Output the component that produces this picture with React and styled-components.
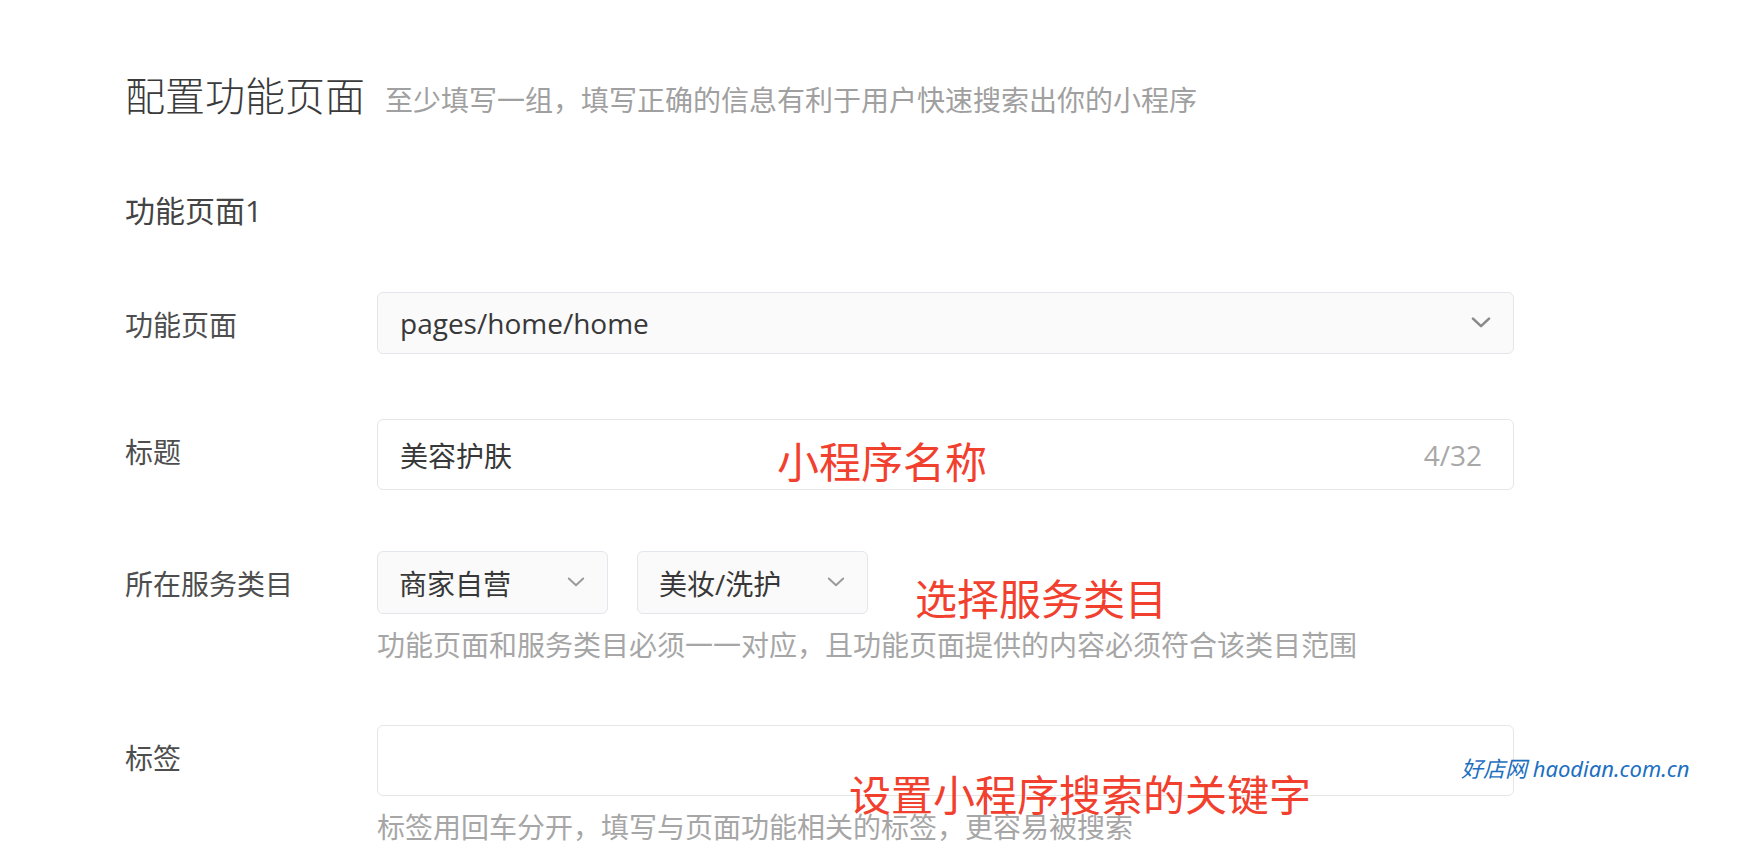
import React from "react";
import styled, { createGlobalStyle } from "styled-components";

const GlobalStyle = createGlobalStyle`
  html, body {
    margin: 0;
    padding: 0;
    background: #fff;
  }
  body {
    font-family: "Open Sans", "Noto Sans CJK SC", sans-serif;
    color: #333;
  }
`;

const Chevron = ({ size = 20, color = "#8a8a8a", weight = 2.6 }) => (
  <svg width={size} height={size * 0.56} viewBox="0 0 20 11" fill="none">
    <path
      d="M2 1.5 L10 9 L18 1.5"
      stroke={color}
      strokeWidth={weight}
      strokeLinecap="round"
      strokeLinejoin="round"
    />
  </svg>
);

const App = () => {
  return (
    <Page>
      <GlobalStyle />
      <Header>
        <Title>配置功能页面</Title>
        <Subtitle>至少填写一组，填写正确的信息有利于用户快速搜索出你的小程序</Subtitle>
      </Header>

      <SectionTitle>功能页面1</SectionTitle>

      <Row>
        <Label>功能页面</Label>
        <Control>
          <Select wide>
            <span>pages/home/home</span>
            <Chevron />
          </Select>
        </Control>
      </Row>

      <Row>
        <Label>标题</Label>
        <Control>
          <TextBox>
            <span>美容护肤</span>
            <Counter>4/32</Counter>
          </TextBox>
          <Note style={{ left: 400, top: 22 }}>小程序名称</Note>
        </Control>
      </Row>

      <Row>
        <Label>所在服务类目</Label>
        <Control>
          <SelectGroup>
            <Select>
              <span>商家自营</span>
              <Chevron size={18} color="#9a9a9a" weight={2.2} />
            </Select>
            <Select>
              <span>美妆/洗护</span>
              <Chevron size={18} color="#9a9a9a" weight={2.2} />
            </Select>
          </SelectGroup>
          <Note style={{ left: 538, top: 27 }}>选择服务类目</Note>
          <Help>功能页面和服务类目必须一一对应，且功能页面提供的内容必须符合该类目范围</Help>
        </Control>
      </Row>

      <Row>
        <Label>标签</Label>
        <Control>
          <TextBox />
          <Note style={{ left: 472, top: 49 }}>设置小程序搜索的关键字</Note>
          <Help>标签用回车分开，填写与页面功能相关的标签，更容易被搜索</Help>
        </Control>
      </Row>

      <Watermark>好店网 haodian.com.cn</Watermark>
    </Page>
  );
};

// ========== 样式 ==========
const Page = styled.div`
  position: relative;
  width: 1738px;
  height: 846px;
  box-sizing: border-box;
  padding: 72px 0 0 125px;
  overflow: hidden;
`;

const Header = styled.div`
  display: flex;
  align-items: baseline;
  gap: 20px;
`;

const Title = styled.h1`
  margin: 0;
  font-size: 40px;
  line-height: 48px;
  font-weight: 300;
  color: #3a3a3a;
`;

const Subtitle = styled.span`
  font-size: 28px;
  color: #a0a0a0;
`;

const SectionTitle = styled.h2`
  margin: 71px 0 0;
  font-size: 30px;
  line-height: 40px;
  font-weight: 400;
  color: #444;
`;

const Row = styled.div`
  display: flex;
  align-items: flex-start;
  margin-top: 61px;

  &:nth-of-type(1) {
    margin-top: 63px;
  }
`;

const Label = styled.div`
  width: 252px;
  flex-shrink: 0;
  font-size: 28px;
  line-height: 66px;
  color: #4e4e4e;
`;

const Control = styled.div`
  position: relative;
  width: 1137px;
`;

const Field = styled.div`
  box-sizing: border-box;
  display: flex;
  align-items: center;
  justify-content: space-between;
  border-radius: 6px;
  font-size: 28px;
  color: #383838;
`;

const Select = styled(Field)`
  width: ${(p) => (p.wide ? "100%" : "231px")};
  height: ${(p) => (p.wide ? "62px" : "63px")};
  padding: ${(p) => (p.wide ? "0 22px" : "0 22px 0 21px")};
  background: #fafafa;
  border: 1.5px solid #e3e6ea;
`;

const SelectGroup = styled.div`
  display: flex;
  gap: 29px;
`;

const TextBox = styled(Field)`
  width: 100%;
  height: 71px;
  padding: 0 31px 0 22px;
  background: #fff;
  border: 1.5px solid #e6e6e6;
`;

const Counter = styled.span`
  color: #a8a8a8;
`;

const Help = styled.div`
  margin-top: 12px;
  font-size: 28px;
  line-height: 38px;
  color: #a6a6a6;
`;

const Note = styled.span`
  position: absolute;
  font-size: 42px;
  line-height: 42px;
  color: #f2402f;
  white-space: nowrap;
`;

const Watermark = styled.div`
  position: absolute;
  left: 1461px;
  top: 754px;
  font-family: "Noto Sans", "Noto Sans CJK SC", sans-serif;
  font-style: italic;
  font-size: 22px;
  line-height: 28px;
  color: #1d6fc0;
  white-space: nowrap;
`;

export default App;
